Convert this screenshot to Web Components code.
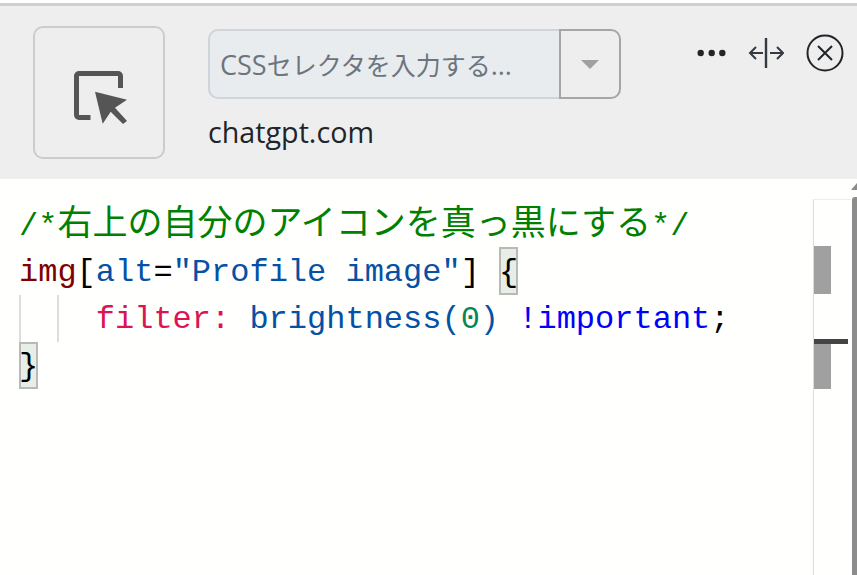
<!DOCTYPE html>
<html lang="ja">
<head>
<meta charset="utf-8">
<title>CSS</title>
<style>
html,body{ margin:0; height:100%; background:#fff; overflow:hidden; }
body{ display:flex; flex-direction:column; }
</style>
</head>
<body>
<top-bar>
    <pick-button></pick-button>
    <selector-box site="chatgpt.com">CSS<ja-text size="25">セレクタを入力する</ja-text>...</selector-box>
    <tool-icons></tool-icons>
</top-bar>
<code-view>
    <code-line style="line-height:53.3px"><code-c>/*<ja-text size="35">右上の自分のアイコンを真っ黒にする</ja-text>*/</code-c></code-line>
    <code-line style="line-height:52.3px"><code-t c="#800000">img</code-t>[<code-t c="#0451a5">alt</code-t>=<code-t c="#0451a5">"Profile image"</code-t>] <code-b>{</code-b></code-line>
    <code-line indent="2" style="line-height:50.3px"><code-t c="#dc1450">filter:</code-t> <code-t c="#0451a5">brightness(</code-t><code-t c="#098658">0</code-t><code-t c="#0451a5">)</code-t> <code-t c="#0000ff">!important</code-t>;</code-line>
    <code-line style="line-height:49.3px"><code-b>}</code-b></code-line>
</code-view>
<script>
class TopBar extends HTMLElement{
    constructor(){
        super();
        this.attachShadow({mode:'open'}).innerHTML = `
            <style>
                :host{
                    display:flex;
                    flex:none;
                    margin-top:3px;
                    border-top:3px solid #cfcfcf;
                    background:#eeeeee;
                    box-sizing:border-box;
                    height:176px;
                    padding:20px 12px 0 33px;
                    align-items:flex-start;
                    font-family:"Open Sans","Noto Sans CJK JP",sans-serif;
                }
            </style>
            <slot></slot>
        `
    }
}
class PickButton extends HTMLElement{
    constructor(){
        super();
        this.attachShadow({mode:'open'}).innerHTML = `
            <style>
                :host{
                    display:flex;
                    flex:none;
                    width:132px;
                    height:133px;
                    box-sizing:border-box;
                    border:2px solid #cccccc;
                    border-radius:10px;
                    align-items:center;
                    justify-content:center;
                    margin-right:43px;
                }
                svg{ display:block; width:64px; height:64px; }
            </style>
            <svg viewBox="0 0 64 64" fill="none">
                <path d="M23.5 56.5H12a2.5 2.5 0 0 1-2.5-2.5V15a2.5 2.5 0 0 1 2.5-2.5h39a2.5 2.5 0 0 1 2.5 2.5v12" stroke="#555" stroke-width="5"/>
                <path d="M28 30.7 60 38.7 48 46.7 60 60 56 63 43.7 50.7 35.7 62.7Z" fill="#555"/>
            </svg>
        `
    }
}
class SelectorBox extends HTMLElement{
    constructor(){
        super();
        this.attachShadow({mode:'open'}).innerHTML = `
            <style>
                :host{
                    display:flex;
                    flex-direction:column;
                    flex:none;
                    width:413px;
                    margin-top:3px;
                }
                .combo{
                    display:flex;
                    height:70px;
                }
                .input{
                    flex:1;
                    box-sizing:border-box;
                    padding-left:10px;
                    line-height:67px;
                    background:#e9ecef;
                    border:2px solid #ced4da;
                    border-right:none;
                    border-radius:10px 0 0 10px;
                    color:#6c757d;
                    font-size:27px;
                    white-space:nowrap;
                }
                .drop{
                    flex:none;
                    width:62px;
                    box-sizing:border-box;
                    display:flex;
                    align-items:center;
                    justify-content:center;
                    border:2px solid #a6a6a6;
                    border-radius:0 10px 10px 0;
                }
                .arrow{
                    width:0;
                    height:0;
                    border-style:solid;
                    border-width:9px 9px 0 9px;
                    border-color:#a0a0a0 transparent transparent;
                }
                .site{
                    margin-top:13px;
                    color:#212529;
                    font-size:28.7px;
                    line-height:40px;
                }
            </style>
            <div class="combo">
                <div class="input"><slot></slot></div>
                <div class="drop"><div class="arrow"></div></div>
            </div>
            <div class="site"></div>
        `
    }
    connectedCallback(){
        this.shadowRoot.querySelector('.site').textContent = this.getAttribute('site');
    }
}
class ToolIcons extends HTMLElement{
    constructor(){
        super();
        this.attachShadow({mode:'open'}).innerHTML = `
            <style>
                :host{
                    display:flex;
                    flex:none;
                    margin-left:auto;
                    align-items:center;
                    gap:21px;
                    height:40px;
                    margin-top:7px;
                }
                svg{ display:block; }
            </style>
            <svg width="31" height="10" viewBox="0 0 31 10" fill="#212529">
                <circle cx="4.7" cy="5" r="3.2"/><circle cx="15.7" cy="5" r="3.2"/><circle cx="26.3" cy="5" r="3.2"/>
            </svg>
            <svg width="36" height="32" viewBox="0 0 36 32" fill="none" stroke="#343a40" stroke-width="2">
                <path d="M18 1V31" stroke-width="2.4"/>
                <path d="M15 16H2M8 10 2 16 8 22M22 16H35M29 10 35 16 29 22"/>
            </svg>
            <svg width="40" height="40" viewBox="0 0 40 40" fill="none" stroke="#212529" stroke-width="2">
                <circle cx="20" cy="20" r="17.5"/>
                <path d="M13 13 27 27M27 13 13 27"/>
            </svg>
        `
    }
}
class CodeView extends HTMLElement{
    constructor(){
        super();
        this.attachShadow({mode:'open'}).innerHTML = `
            <style>
                :host{
                    display:flex;
                    flex:1;
                    min-height:0;
                    background:#fffffe;
                    position:relative;
                }
                .lines{
                    flex:1;
                    padding:21px 0 0 19px;
                    color:#000;
                    font-family:"Liberation Mono","Noto Sans CJK JP",monospace;
                    font-size:32px;
                }
                .ruler{
                    flex:none;
                    width:38px;
                    box-sizing:border-box;
                    margin-top:20px;
                    border-left:1px solid #dddddd;
                    border-top:1px solid #eeeeee;
                    display:flex;
                    flex-direction:column;
                    align-items:flex-start;
                }
                .mark{ width:17px; background:#a0a0a0; flex:none; }
                .m1{ height:48px; margin-top:46px; }
                .m2{ height:45px; }
                .cursor{ width:34px; height:5px; background:#444; margin-top:45px; flex:none; }
                .bar{
                    flex:none;
                    width:5px;
                    margin:18px 0 0 1px;
                    background:#8c8c8c;
                    border-radius:3px 0 0 0;
                }
                .up{
                    position:absolute;
                    right:0;
                    top:4px;
                    width:0;
                    height:0;
                    border-style:solid;
                    border-width:0 0 7px 6px;
                    border-color:transparent transparent #8c8c8c;
                }
            </style>
            <div class="lines"><slot></slot></div>
            <div class="ruler">
                <div class="mark m1"></div>
                <div class="cursor"></div>
                <div class="mark m2"></div>
            </div>
            <div class="bar"></div>
            <div class="up"></div>
        `
    }
}
class CodeLine extends HTMLElement{
    constructor(){
        super();
        this.attachShadow({mode:'open'}).innerHTML = `<style>
                :host{
                    display:flex;
                    height:47.3px;
                    white-space:pre;
                }
                .guide{
                    flex:none;
                    width:38.4px;
                    box-sizing:border-box;
                    border-left:2px solid #dddddd;
                }
            </style><span class="text"><slot></slot></span>`
    }
    connectedCallback(){
        const indent = parseInt(this.getAttribute('indent') || '0');
        const text = this.shadowRoot.querySelector('.text');
        for(let i = 0; i < indent; i++){
            const guide = document.createElement('span');
            guide.className = 'guide';
            this.shadowRoot.insertBefore(guide, text);
        }
    }
}
class CodeToken extends HTMLElement{
    constructor(){
        super();
        this.attachShadow({mode:'open'}).innerHTML = `<style>:host{ display:inline; }</style><slot></slot>`
    }
    connectedCallback(){
        this.style.color = this.getAttribute('c');
    }
}
class CodeComment extends HTMLElement{
    constructor(){
        super();
        this.attachShadow({mode:'open'}).innerHTML = `<style>:host{ display:inline; color:#008000; }</style><slot></slot>`
    }
}
class JaText extends HTMLElement{
    constructor(){
        super();
        this.attachShadow({mode:'open'}).innerHTML = `<style>:host{ display:inline; font-family:"Noto Sans CJK JP",sans-serif; line-height:0; }</style><slot></slot>`
    }
    connectedCallback(){
        this.style.fontSize = this.getAttribute('size') + 'px';
    }
}
class CodeBracket extends HTMLElement{
    constructor(){
        super();
        this.attachShadow({mode:'open'}).innerHTML = `<style>
                :host{
                    display:inline-block;
                    height:47.3px;
                    background:#e6eee6;
                    box-shadow:inset 0 0 0 2px #b9b9b9;
                }
            </style><slot></slot>`
    }
}
customElements.define('top-bar', TopBar)
customElements.define('pick-button', PickButton)
customElements.define('selector-box', SelectorBox)
customElements.define('tool-icons', ToolIcons)
customElements.define('code-view', CodeView)
customElements.define('code-line', CodeLine)
customElements.define('code-t', CodeToken)
customElements.define('code-c', CodeComment)
customElements.define('ja-text', JaText)
customElements.define('code-b', CodeBracket)
</script>
</body>
</html>
